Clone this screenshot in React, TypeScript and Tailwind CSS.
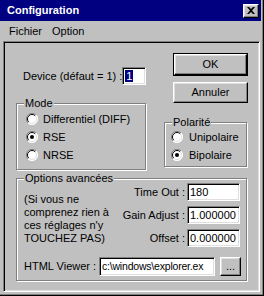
import React from 'react'

const raised =
  'bg-[#c0c0c0] border border-t-white border-l-white border-r-black border-b-black shadow-[inset_-1px_-1px_0_#808080,inset_1px_1px_0_#dfdfdf]'
const sunken =
  'bg-white border border-t-[#808080] border-l-[#808080] border-r-white border-b-white shadow-[inset_1px_1px_0_#000,inset_-1px_-1px_0_#dfdfdf]'
const etched = 'relative border border-[#808080] shadow-[inset_1px_1px_0_#fff,1px_1px_0_#fff]'

function Radio({ checked }: { checked?: boolean }) {
  return (
    <svg width="12" height="12" viewBox="0 0 12 12" className="shrink-0">
      <circle cx="6" cy="6" r="5.5" fill="#fff" />
      <path d="M10 2 A5.5 5.5 0 0 0 2 10" fill="none" stroke="#808080" strokeWidth="1" />
      <path d="M9.2 2.8 A4.5 4.5 0 0 0 2.8 9.2" fill="none" stroke="#000" strokeWidth="1" />
      <path d="M2 10 A5.5 5.5 0 0 0 10 2" fill="none" stroke="#fff" strokeWidth="1" />
      <path d="M2.8 9.2 A4.5 4.5 0 0 0 9.2 2.8" fill="none" stroke="#dfdfdf" strokeWidth="1" />
      {checked && <circle cx="6" cy="6" r="2" fill="#000" />}
    </svg>
  )
}

function Group({ label, className, children }: { label: string; className: string; children: React.ReactNode }) {
  return (
    <div className={`${etched} ${className}`}>
      <span className="absolute -top-[8px] left-[7px] px-[1px] bg-[#c0c0c0] leading-[14px]">{label}</span>
      {children}
    </div>
  )
}

function Field({ label, value }: { label: string; value: string }) {
  return (
    <div className="flex items-center justify-end h-[18px]">
      <span>{label}</span>
      <div className={`${sunken} ml-[2px] w-[53px] h-[18px] flex items-center pl-[2px]`}>{value}</div>
    </div>
  )
}

export default function App() {
  return (
    <div className="w-[264px] h-[296px] bg-[#c0c0c0] flex flex-col pr-[3px] pb-[3px] shadow-[inset_-1px_-1px_0_#000,inset_-2px_-2px_0_#808080] font-['Liberation_Sans',Arial,sans-serif] text-[11px] text-black overflow-hidden">
      {/* title bar */}
      <div className="h-[21px] bg-[#000080] flex items-center justify-between pl-[7px] pr-[2px] shrink-0">
        <span className="text-white font-bold text-[11px]">Configuration</span>
        <div className={`${raised} w-[16px] h-[14px] flex items-center justify-center`}>
          <svg width="8" height="7" viewBox="0 0 8 7">
            <path d="M0 0 L2 0 L4 2 L6 0 L8 0 L5 3.5 L8 7 L6 7 L4 5 L2 7 L0 7 L3 3.5 Z" fill="#000" />
          </svg>
        </div>
      </div>

      {/* menu bar */}
      <div className="h-[19px] flex items-center gap-[10px] pl-[9px] pt-[1px] shrink-0">
        <span>Fichier</span>
        <span>Option</span>
      </div>

      {/* main panel */}
      <div className="ml-[3px] mt-[1px] w-[257px] h-[251px] border border-t-[#808080] border-l-[#808080] border-r-white border-b-white shadow-[inset_1px_1px_0_#000,inset_-1px_-1px_0_#dfdfdf] p-[1px]">
        <div className="flex items-start">
          {/* left column */}
          <div className="ml-[11px] w-[130px] flex flex-col">
            <div className="mt-[24px] h-[18px] flex items-center">
              <span className="ml-[7px] w-[100px] whitespace-nowrap">Device (défaut = 1) :</span>
              <div className={`${sunken} w-[35px] h-[18px] flex items-center pl-[2px]`}>
                <span className="bg-[#000080] text-white px-[1px] leading-[12px]">1</span>
              </div>
            </div>
            <Group label="Mode" className="mt-[18px] h-[67px]">
              <div className="pt-[6px] pl-[9px] flex flex-col">
                <div className="h-[18px] flex items-center gap-[5px]">
                  <Radio />
                  <span>Differentiel (DIFF)</span>
                </div>
                <div className="h-[18px] flex items-center gap-[5px]">
                  <Radio checked />
                  <span>RSE</span>
                </div>
                <div className="h-[18px] flex items-center gap-[5px]">
                  <Radio />
                  <span>NRSE</span>
                </div>
              </div>
            </Group>
          </div>

          {/* right column */}
          <div className="ml-[18px] w-[83px] flex flex-col">
            <div className="mt-[10px] ml-[9px] w-[75px] h-[23px] border border-black">
              <div className={`${raised} w-full h-full flex items-center justify-center`}>OK</div>
            </div>
            <div className={`${raised} mt-[6px] ml-[9px] w-[75px] h-[21px] flex items-center justify-center`}>
              Annuler
            </div>
            <Group label="Polarité" className="mt-[19px] h-[45px]">
              <div className="pt-[5px] pl-[6px] flex flex-col">
                <div className="h-[18px] flex items-center gap-[6px]">
                  <Radio />
                  <span>Unipolaire</span>
                </div>
                <div className="h-[18px] flex items-center gap-[6px]">
                  <Radio checked />
                  <span>Bipolaire</span>
                </div>
              </div>
            </Group>
          </div>
        </div>

        {/* options */}
        <Group label="Options avancées" className="ml-[11px] mt-[8px] w-[231px] h-[103px]">
          <div className="flex">
            <div className="pl-[7px] pt-[14px] leading-[13px]">
              (Si vous ne
              <br />
              comprenez rien à
              <br />
              ces réglages n'y
              <br />
              TOUCHEZ PAS)
            </div>
            <div className="ml-auto mr-[6px] pt-[4px] flex flex-col gap-[5px]">
              <Field label="Time Out :" value="180" />
              <Field label="Gain Adjust :" value="1.000000" />
              <Field label="Offset :" value="0.000000" />
            </div>
          </div>
          <div className="mt-[10px] pl-[7px] flex items-center">
            <span className="w-[75px] whitespace-nowrap">HTML Viewer :</span>
            <div className={`${sunken} w-[116px] h-[19px] flex items-center pl-[2px] whitespace-nowrap text-[10.5px] tracking-[-0.2px]`}>
              c:\windows\explorer.ex
            </div>
            <div className={`${raised} ml-[5px] w-[21px] h-[19px] flex items-center justify-center leading-none`}>
              ...
            </div>
          </div>
        </Group>
      </div>
    </div>
  )
}
